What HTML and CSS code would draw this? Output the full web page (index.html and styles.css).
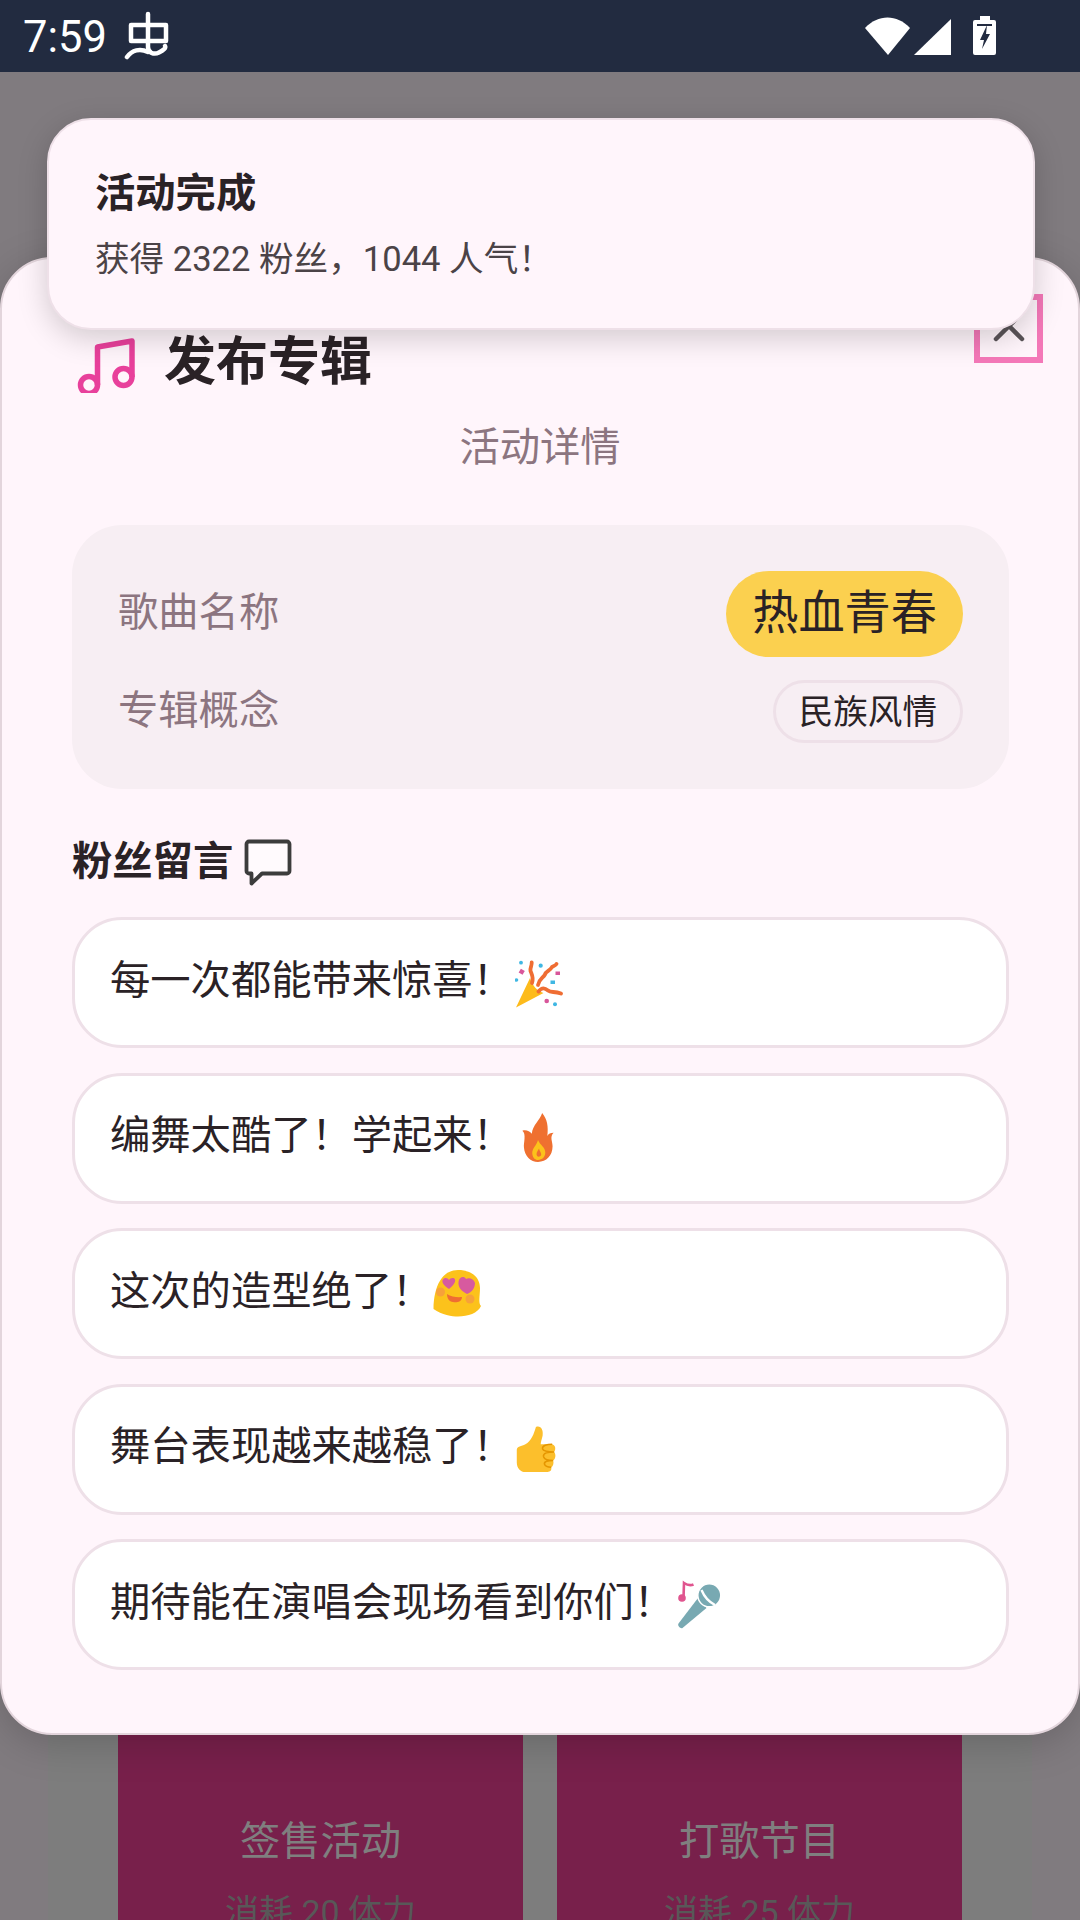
FILE: index.html
```html
<!DOCTYPE html>
<html lang="zh-CN">
<head>
<meta charset="utf-8">
<title>发布专辑</title>
<link rel="stylesheet" href="styles.css">
</head>
<body>
<header class="status">
  <span class="time">7:59</span>
  <svg class="bug" width="46" height="50" viewBox="124 10 46 50"><path d="M131 25H166V41H131ZM148 14V47C148 53 154 55 159 52.500C164 50 166 48 165 46" fill="none" stroke="#fff" stroke-width="4.500" stroke-linecap="round" stroke-linejoin="round"/><path d="M127 57C132 50 140 48 148 52" fill="none" stroke="#fff" stroke-width="4.500" stroke-linecap="round"/></svg>
  <span class="status-spacer"></span>
  <svg class="sys" width="135" height="42" viewBox="865 14 135 42">
    <path d="M865 27C878 13 897 13 910 27L888 54Z" fill="#fff"/>
    <path d="M914 54L951 18V54Z" fill="#fff"/>
    <path d="M980 15H990V19H994A2 2 0 0 1 996 21V52A2 2 0 0 1 994 54H975A2 2 0 0 1 973 52V21A2 2 0 0 1 975 19H980Z" fill="#fff"/>
    <path d="M977 24H992" stroke="#222b40" stroke-width="2"/>
    <path d="M987 24L980 39H984L982 48L990 33H986Z" fill="#222b40"/>
  </svg>
</header>

<main class="backdrop">
  <section class="panel">
    <div class="action">
      <div class="action-name">签售活动</div>
      <div class="action-cost">消耗 20 体力</div>
    </div>
    <div class="action">
      <div class="action-name">打歌节目</div>
      <div class="action-cost">消耗 25 体力</div>
    </div>
  </section>
</main>

<section class="sheet">
  <div class="sheet-head">
    <div class="title-row">
      <svg class="music" width="64" height="60" viewBox="14 10 64 60"><g fill="none" stroke="#e8409b" stroke-width="5.500" stroke-linejoin="round"><circle cx="29" cy="62" r="8.500"/><circle cx="63.500" cy="54" r="8.500"/><path d="M37.500 62V24L72 18V54"/></g></svg>
      <h1 class="title">发布专辑</h1>
    </div>
    <button class="close" aria-label="关闭"><svg class="close-x" width="36" height="36" viewBox="0 0 36 36"><path d="M5 5L31 31M31 5L5 31" stroke="#5a5458" stroke-width="4.500" stroke-linecap="round"/></svg></button>
  </div>
  <p class="subtitle">活动详情</p>

  <div class="info">
    <div class="info-row">
      <span class="info-label">歌曲名称</span>
      <span class="pill-song">热血青春</span>
    </div>
    <div class="info-row">
      <span class="info-label">专辑概念</span>
      <span class="pill-concept">民族风情</span>
    </div>
  </div>

  <h2 class="section-title">粉丝留言
    <svg class="chat" width="50" height="48" viewBox="244 838 50 48"><path d="M250 841.500H288A2.500 2.500 0 0 1 290.500 844V871A2.500 2.500 0 0 1 288 873.500H263L252.500 883.500V873.500H250A2.500 2.500 0 0 1 247.500 871V844A2.500 2.500 0 0 1 250 841.500Z" fill="#fffafd" stroke="#3c3c3c" stroke-width="3.800" stroke-linejoin="round"/></svg>
  </h2>

  <ul class="comments">
    <li class="comment"><span class="comment-text">每一次都能带来惊喜！</span>
      <svg class="emoji popper" width="48" height="50" viewBox="0 0 48 50">
        <path d="M1 49.500L15 20C17 27 22 33 28.500 35Z" fill="#fdbb1b"/>
        <g fill="none" stroke="#ef6d33" stroke-width="3.800" stroke-linecap="round" stroke-linejoin="round">
          <path d="M17 25C19 20 17 17 15.500 13C15 9 17 8 16.700 4.500"/>
          <path d="M23 27C24 21 28 20 30 16.500C31 13 35 13 37 9C39 8 41 7 41.500 6"/>
          <path d="M23.500 33.500C27 29 30 30 33 32.500C36 35 39 33 46 35.500"/>
        </g>
        <g fill="#3fb7e3"><circle cx="6" cy="4.700" r="1.900"/><circle cx="25.700" cy="7.700" r="2.100"/><circle cx="1.500" cy="22" r="1.800"/><rect x="35.500" y="22.500" width="4.500" height="3.500"/><circle cx="40" cy="46.300" r="2"/></g>
        <g fill="#d8569a"><rect x="4.500" y="11.500" width="4.500" height="4.500" transform="rotate(30 6.700 13.700)"/><rect x="40.500" y="13.500" width="4.500" height="3.500"/><circle cx="31.700" cy="43" r="2.300"/></g>
      </svg>
    </li>
    <li class="comment"><span class="comment-text">编舞太酷了！学起来！</span>
      <svg class="emoji flame" width="36" height="51" viewBox="0 0 32 49">
        <path d="M20 1C18 8 11 12 10 21C8 18 4 17 1 18C5 21 2 30 2.500 34C3 42 9 48 16 48C24 48 30 42 30 33C30 28 27 24 31 20C28 20 26 21 25 23C26 14 25 7 20 1Z" fill="#ef7030"/>
        <path d="M16 27C15 32 10 35 10.500 40C11 44 13 46 16 46C20 46 23 43.500 23 39C23 34 18 32 16 27Z" fill="#fcc21b"/>
        <path d="M17 35C15 38 14 40 15 42C16 43.500 18 43 19 41.500C19.500 39 17.500 38 17 35Z" fill="#ef7030"/>
      </svg>
    </li>
    <li class="comment"><span class="comment-text">这次的造型绝了！</span>
      <svg class="emoji blob" width="49" height="48" viewBox="13 8 49 48">
        <path d="M38 9C22 9 14 25 13.500 48C22 54 32 55.500 38 55.500C48 55.500 58 52 61 45C58 42 60 35 60 27C60 15 50 9 38 9Z" fill="#fcc21b"/>
        <circle cx="20.500" cy="31" r="4.500" fill="#f7a13a"/><circle cx="50" cy="38" r="4.500" fill="#f7a13a"/>
        <path d="M29 28C24 25 21 21 23 18.500C25 16 28 17 29 19C30 17 34 16 35 18.500C36 21 33 25 29 28Z" fill="#d75a9f"/>
        <path d="M47 33C41 30 38 26 38.500 21C39 16 44 14.500 46 18C49 16 54 18 55 22C55 27 52 31 47 33Z" fill="#d75a9f"/>
        <path d="M27 33C31 36 38 36.500 42 36C42 41 36 42 33 41C29 41 27 37 27 33Z" fill="#ef6d33"/>
      </svg>
    </li>
    <li class="comment"><span class="comment-text">舞台表现越来越稳了！</span>
      <svg class="emoji thumb" width="44" height="49" viewBox="0 0 46 49">
        <path d="M5 25C5 21 10 21 14 19C20 16 23 8 25 1C30 -1 33 4 32 10C31 14 30 17 30 19L41 19C46 19 46 25 44 27C46 29 46 34 43 36C44 39 43 42 41 43C42 47 39 48 36 48L14 48C9 48 5 44 5 38Z" fill="#fcbf2c"/>
        <path d="M42 19C37 19 31 20 32 24C33 27 39 27 44 27C38 27 32 28 33 32C34 35 39 36 43 36C38 36 33 37 34 40C35 43 38 43 41 43" fill="none" stroke="#e59600" stroke-width="1.600"/>
      </svg>
    </li>
    <li class="comment"><span class="comment-text">期待能在演唱会现场看到你们！</span>
      <svg class="emoji mic" width="46" height="50" viewBox="16 18 46 50">
        <path d="M23.500 36L24 21C27 23 30 24 33.500 22.500" fill="none" stroke="#e0558f" stroke-width="2.600"/>
        <circle cx="22" cy="36" r="3.800" fill="#e0558f"/>
        <path d="M38 36L46.500 46L22.500 66C20.500 67 17 63.500 18.500 61.500Z" fill="#78a9b2"/>
        <circle cx="49.300" cy="33.300" r="11.500" fill="#78a9b2" stroke="#fff" stroke-width="1.500"/>
        <path d="M41.500 28C44 34 49 40 55 43" fill="none" stroke="#fff" stroke-width="2.400"/>
      </svg>
    </li>
  </ul>
</section>

<aside class="toast">
  <div class="toast-title">活动完成</div>
  <div class="toast-body">获得 2322 粉丝，1044 人气！</div>
</aside>
</body>
</html>
```

FILE: styles.css
```css
* { box-sizing: border-box; }
html, body { margin: 0; padding: 0; }
body {
  position: relative;
  width: 1080px;
  height: 1920px;
  overflow: hidden;
  display: flex;
  flex-direction: column;
  background: #807b7f;
  font-family: Roboto, "Noto Sans CJK SC", sans-serif;
  color: #2a2226;
}

.status {
  height: 72px;
  flex: none;
  display: flex;
  align-items: center;
  background: #222b40;
  color: #fff;
  padding-left: 23px;
}
.time { font-size: 43.500px; line-height: 72px; padding-top: 3px; }
.bug { margin-left: 17px; margin-top: -2px; }
.status-spacer { flex: 1; }
.sys { margin-right: 80px; }

.backdrop { flex: 1; min-height: 0; display: flex; padding: 128px 48px 0; }
.panel {
  flex: 1;
  display: grid;
  grid-template-columns: 405px 405px;
  column-gap: 34px;
  justify-content: center;
  background: #7d7d7d;
  padding-top: 1300px;
  overflow: hidden;
}
.action { background: #78204b; padding-top: 312px; text-align: center; height: 500px; }
.action-name { font-size: 40.300px; line-height: 60px; color: #7f7f7f; }
.action-cost { font-size: 34px; line-height: 50px; margin-top: 15px; color: #585858; }

.sheet {
  position: absolute;
  top: 257px;
  left: 0;
  right: 0;
  height: 1478px;
  padding: 35px 72px 0;
  background: #fff5fb;
  border: 2px solid #e3d5dc;
  border-radius: 52px;
  box-shadow: 0 8px 40px rgba(0, 0, 0, .18);
}
.sheet-head { display: flex; justify-content: space-between; align-items: flex-start; height: 101px; margin-left: -2px; }
.title-row { display: flex; align-items: center; height: 60px; margin-top: 39px; }
.music { display: block; margin-left: 2px; margin-top: -1px; }
.title { margin: 0 0 0 26px; font-size: 52px; line-height: 60px; font-weight: 700; color: #2a2226; }
.close {
  width: 69px;
  height: 69px;
  margin-right: -37px;
  padding: 0;
  background: transparent;
  border: 6px solid #f478b8;
  display: flex;
  align-items: center;
  justify-content: center;
}
.close-x { margin-bottom: 5px; }
.subtitle { margin: 23px 0 0; text-align: center; font-size: 40.300px; line-height: 60px; color: #8c7580; }

.info {
  margin: 47px -3px 0 -2px;
  height: 264px;
  padding: 46px 46px;
  background: #f7eef3;
  border-radius: 50px;
  display: flex;
  flex-direction: column;
  gap: 23px;
}
.info-row { display: flex; justify-content: space-between; align-items: center; }
.info-label { font-size: 40.300px; line-height: 60px; color: #8c7580; position: relative; top: -1px; }
.pill-song {
  height: 86px;
  padding: 0 26px;
  border-radius: 43px;
  background: #fbd04f;
  font-size: 46.200px;
  line-height: 84px;
}
.pill-concept {
  height: 63px;
  padding: 0 23px;
  border: 3px solid #eee0e8;
  border-radius: 32px;
  font-size: 34.600px;
  line-height: 58px;
}

.section-title {
  margin: 43px -2px 0;
  height: 60px;
  display: flex;
  align-items: center;
  font-size: 40.300px;
  line-height: 60px;
  font-weight: 700;
}
.chat { margin-left: 10px; margin-top: 0; }

.comments { list-style: none; margin: 25px -3px 0 -2px; padding: 0; display: flex; flex-direction: column; gap: 24.500px; }
.comment {
  height: 131px;
  padding-left: 35px;
  display: flex;
  align-items: center;
  background: #fff;
  border: 3px solid #eee0e8;
  border-radius: 50px;
}
.comment-text { font-size: 40.300px; line-height: 60px; padding-bottom: 4px; }
.emoji { flex: none; display: block; }
.popper { margin-left: 2px; }
.flame { margin-left: 7px; margin-top: -2px; }
.blob { margin-left: 1px; margin-top: -2px; }
.thumb { margin-left: -1px; }
.mic { margin-left: 2px; }

.toast {
  position: absolute;
  top: 118px;
  left: 47px;
  width: 988px;
  height: 212px;
  padding: 44px 46px 0;
  background: #fff5fb;
  border: 2px solid #eee0e8;
  border-radius: 44px;
  box-shadow: 0 8px 30px rgba(0, 0, 0, .18);
}
.toast-title { font-size: 40.300px; line-height: 60px; font-weight: 700; }
.toast-body { margin-top: 10px; font-size: 34.600px; line-height: 50px; color: #4b4347; }
```
